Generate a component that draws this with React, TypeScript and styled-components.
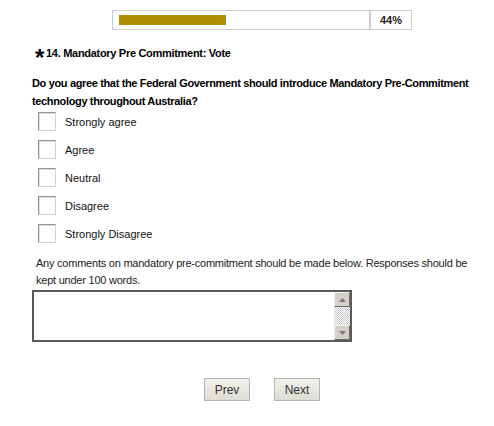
import styled, { createGlobalStyle } from "styled-components";

const GlobalStyle = createGlobalStyle`
  body {
    margin: 0;
    background: #ffffff;
    font-family: "Liberation Sans", Arial, sans-serif;
    color: #000000;
  }
`;

const Page = styled.div`
  width: 460px;
  padding: 10px 0 0 32px;
  display: flex;
  flex-direction: column;
`;

const ProgressRow = styled.div`
  display: flex;
  justify-content: center;
`;

const ProgressTable = styled.div`
  width: 300px;
  height: 20px;
  box-sizing: border-box;
  border: 1px solid #cccccc;
  display: flex;
`;

const BarCell = styled.div`
  flex: 1;
  border-right: 2px solid #cccccc;
  padding: 4px 6px;
  box-sizing: border-box;
`;

const Bar = styled.div<{ $pct: number }>`
  width: ${(p) => p.$pct}%;
  height: 10px;
  background: #ae8e00;
`;

const PercentCell = styled.div`
  width: 40px;
  display: flex;
  align-items: center;
  justify-content: center;
  font-size: 11px;
  font-weight: bold;
  color: #222222;
`;

const Title = styled.h2`
  margin: 17px 0 0 3px;
  font-size: 11px;
  font-weight: bold;
  line-height: 13px;
  letter-spacing: -0.3px;
  display: flex;
  align-items: center;
  gap: 2px;
`;

const Star = styled.span`
  font-size: 24px;
  line-height: 13px;
  font-weight: bold;
  position: relative;
  top: 4px;
`;

const Question = styled.p`
  margin: 14px 0 0 0;
  font-size: 11px;
  font-weight: bold;
  line-height: 18px;
  letter-spacing: -0.35px;
`;

const Options = styled.div`
  margin: 2px 0 0 6px;
  display: flex;
  flex-direction: column;
  gap: 9px;
`;

const Option = styled.label`
  display: flex;
  align-items: center;
  gap: 9px;
  font-size: 11px;
  color: #111111;
  height: 19px;
`;

const Box = styled.input`
  appearance: none;
  margin: 0;
  width: 18px;
  height: 19px;
  box-sizing: border-box;
  border: 1px solid;
  border-color: #939393 #d2d2d2 #d2d2d2 #939393;
  box-shadow: inset 1px 1px 0 #dedede;
  background: #ffffff;
`;

const Comment = styled.p`
  margin: 12px 0 0 4px;
  width: 440px;
  font-size: 11px;
  line-height: 17px;
  letter-spacing: -0.23px;
  color: #222222;
`;

const TextBox = styled.div`
  margin-top: 1px;
  width: 320px;
  height: 52px;
  box-sizing: border-box;
  border: 2px solid #5a5a5a;
  display: flex;
`;

const Area = styled.textarea`
  flex: 1;
  border: none;
  resize: none;
  outline: none;
  overflow: hidden;
  padding: 2px;
  font-family: "Liberation Sans", Arial, sans-serif;
  font-size: 11px;
`;

const ScrollBar = styled.div`
  width: 16px;
  display: flex;
  flex-direction: column;
`;

const ScrollButton = styled.div`
  height: 15px;
  box-sizing: border-box;
  background: #d4d0c8;
  border: 1px solid;
  border-color: #f4f4f0 #6e6e6e #6e6e6e #f4f4f0;
  display: flex;
  align-items: center;
  justify-content: center;
`;

const Track = styled.div`
  flex: 1;
  background-color: #ffffff;
  background-image: repeating-conic-gradient(#c8c8c8 0 25%, #ffffff 0 50%);
  background-size: 2px 2px;
`;

const Buttons = styled.div`
  margin-top: 36px;
  display: flex;
  justify-content: center;
  gap: 24px;
`;

const NavButton = styled.button`
  width: 46px;
  height: 23px;
  border: 1px solid #b5b5b5;
  background: linear-gradient(#f2f2ec, #dcdcd4);
  color: #333333;
  font-family: "Liberation Sans", Arial, sans-serif;
  font-size: 12px;
  padding: 0;
`;

const Arrow = ({ up }: { up?: boolean }) => (
  <svg width="7" height="4" viewBox="0 0 7 4">
    <path d={up ? "M0 4 L3.5 0 L7 4 Z" : "M0 0 L3.5 4 L7 0 Z"} fill="#7a7a7a" />
  </svg>
);

const options = ["Strongly agree", "Agree", "Neutral", "Disagree", "Strongly Disagree"];

export default function App() {
  const pct = 44;
  return (
    <>
      <GlobalStyle />
      <Page>
        <ProgressRow>
          <ProgressTable>
            <BarCell>
              <Bar $pct={pct} />
            </BarCell>
            <PercentCell>{pct}%</PercentCell>
          </ProgressTable>
        </ProgressRow>
        <Title>
          <Star>*</Star>14. Mandatory Pre Commitment: Vote
        </Title>
        <Question>
          Do you agree that the Federal Government should introduce Mandatory
          Pre-Commitment technology throughout Australia?
        </Question>
        <Options>
          {options.map((o) => (
            <Option key={o}>
              <Box type="checkbox" />
              {o}
            </Option>
          ))}
        </Options>
        <Comment>
          Any comments on mandatory pre-commitment should be made below.
          Responses should be kept under 100 words.
        </Comment>
        <TextBox>
          <Area />
          <ScrollBar>
            <ScrollButton>
              <Arrow up />
            </ScrollButton>
            <Track />
            <ScrollButton>
              <Arrow />
            </ScrollButton>
          </ScrollBar>
        </TextBox>
        <Buttons>
          <NavButton>Prev</NavButton>
          <NavButton>Next</NavButton>
        </Buttons>
      </Page>
    </>
  );
}
